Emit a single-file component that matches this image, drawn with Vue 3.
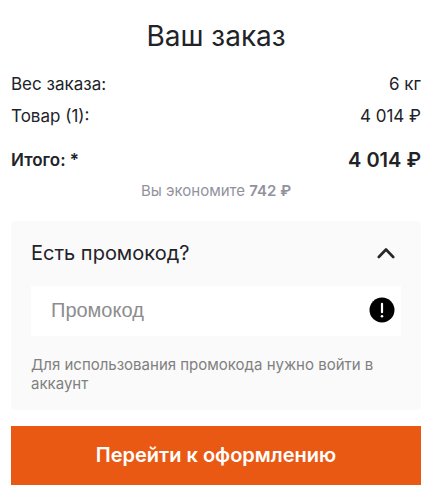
<script setup>
	import { ref } from 'vue'

	const rows = [
		{ label: 'Вес заказа:', value: '6 кг' },
		{ label: 'Товар (1):', value: '4 014 ₽' }
	]

	const promoOpen = ref(true)
	const promoCode = ref('')
</script>

<template>
	<main class="order">
		<h1>Ваш заказ</h1>

		<dl class="rows">
			<div class="row" v-for="row in rows" :key="row.label">
				<dt>{{ row.label }}</dt>
				<dd>{{ row.value }}</dd>
			</div>
			<div class="row total">
				<dt>Итого: *</dt>
				<dd>4 014 ₽</dd>
			</div>
		</dl>

		<p class="saving">Вы экономите <b>742 ₽</b></p>

		<section class="promo">
			<button type="button" class="toggle" :aria-expanded="promoOpen" @click="promoOpen = !promoOpen">
				<span>Есть промокод?</span>
				<svg :class="{ closed: !promoOpen }" width="18" height="12" viewBox="0 0 18 12" aria-hidden="true">
					<path d="M1.8 10 9 2.5 16.2 10" fill="none" stroke="#25272b" stroke-width="2.6" stroke-linecap="round" stroke-linejoin="round" />
				</svg>
			</button>

			<div v-if="promoOpen">
				<label class="field">
					<input type="text" v-model="promoCode" placeholder="Промокод" aria-label="Промокод">
					<svg width="26" height="26" viewBox="0 0 26 26" aria-hidden="true">
						<circle cx="13" cy="13" r="12.5" fill="#000" />
						<path d="M13 6.8v8.4" stroke="#fff" stroke-width="2.2" stroke-linecap="round" />
						<circle cx="13" cy="19.2" r="1.3" fill="#fff" />
					</svg>
				</label>
				<p class="hint">Для использования промокода нужно войти в аккаунт</p>
			</div>
		</section>

		<button type="button" class="cta">Перейти к оформлению</button>
	</main>
</template>

<style>
	body {
		background: #fff;
	}
</style>

<style scoped>
	.order {
		padding: 19px 19px 11px 11px;
		color: #212329;
		font-family: Inter, "Liberation Sans", sans-serif;
	}
	h1 {
		margin: 0 0 15px;
		font-size: 28px;
		font-weight: 400;
		line-height: 34px;
		text-align: center;
	}
	.rows {
		margin: 0;
	}
	.row {
		display: flex;
		justify-content: space-between;
		align-items: center;
		font-size: 17px;
		line-height: 32px;
	}
	.row dd {
		margin: 0;
	}
	.total {
		margin-top: 12px;
		font-weight: 600;
	}
	.total dd {
		font-size: 20px;
	}
	.saving {
		margin: 5px 0 20px;
		color: #92929d;
		font-size: 15px;
		line-height: 20px;
		text-align: center;
	}
	.saving b {
		font-weight: 600;
	}
	.promo {
		padding: 20px 20px 17px;
		border-radius: 4px;
		background: #fafafa;
	}
	.toggle {
		display: flex;
		justify-content: space-between;
		align-items: center;
		width: 100%;
		padding: 0 6px 0 0;
		border: none;
		background: none;
		color: inherit;
		font: inherit;
		font-size: 20px;
		line-height: 24px;
		cursor: pointer;
	}
	.toggle .closed {
		transform: rotate(180deg);
	}
	.field {
		display: flex;
		align-items: center;
		margin-top: 21px;
		padding: 0 6px 2px 0;
		background: #fff;
	}
	.field input {
		flex: 1;
		min-width: 0;
		height: 48px;
		padding: 0 20px;
		border: none;
		outline: none;
		background: none;
		color: inherit;
		font-family: "Liberation Sans", Arial, sans-serif;
		font-size: 20px;
	}
	.field input::placeholder {
		color: #8d8d90;
		opacity: 1;
	}
	.hint {
		margin: 19px 0 0;
		color: #808080;
		font-size: 15px;
		line-height: 19px;
	}
	.cta {
		display: block;
		width: 100%;
		margin-top: 16px;
		padding: 17px 20px 18px;
		border: none;
		background: #ea5914;
		color: #fff;
		font: inherit;
		font-size: 20px;
		font-weight: 600;
		line-height: 24px;
		cursor: pointer;
	}
</style>
